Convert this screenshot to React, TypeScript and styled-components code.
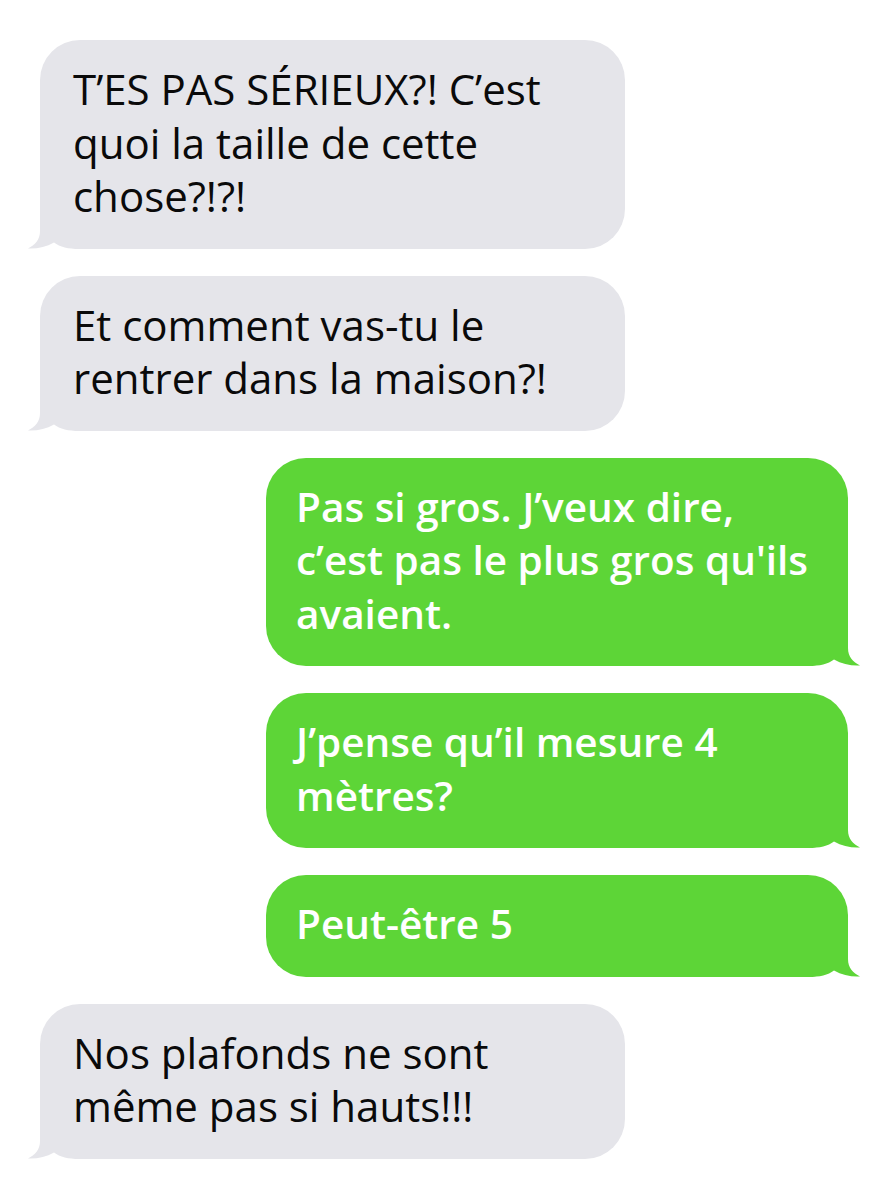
import React from 'react'
import styled, { createGlobalStyle } from 'styled-components'

const GlobalStyle = createGlobalStyle`
  html, body {
    margin: 0;
    padding: 0;
    background: #ffffff;
  }
`

type Side = 'in' | 'out'

const messages: { side: Side; lines: string[] }[] = [
  { side: 'in', lines: ['T’ES PAS SÉRIEUX?! C’est', 'quoi la taille de cette', 'chose?!?!'] },
  { side: 'in', lines: ['Et comment vas-tu le', 'rentrer dans la maison?!'] },
  { side: 'out', lines: ['Pas si gros. J’veux dire,', 'c’est pas le plus gros qu\'ils', 'avaient.'] },
  { side: 'out', lines: ['J’pense qu’il mesure 4', 'mètres?'] },
  { side: 'out', lines: ['Peut-être 5'] },
  { side: 'in', lines: ['Nos plafonds ne sont', 'même pas si hauts!!!'] },
]

const colors = {
  in: '#e5e5ea',
  out: '#5dd537',
}

const Thread = styled.div`
  display: flex;
  flex-direction: column;
  gap: 27px;
  padding: 40px 0 38px;
  width: 890px;
`

const Bubble = styled.div<{ $side: Side }>`
  position: relative;
  box-sizing: border-box;
  width: ${(p) => (p.$side === 'in' ? '585px' : '582px')};
  margin-left: ${(p) => (p.$side === 'in' ? '40px' : '266px')};
  padding: 22px ${(p) => (p.$side === 'in' ? '33px' : '30px')} 26px;
  border-radius: 40px;
  background: ${(p) => colors[p.$side]};
  color: ${(p) => (p.$side === 'in' ? '#0a0a0a' : '#ffffff')};
  font-family: 'Open Sans', 'Noto Sans', sans-serif;
  font-weight: ${(p) => (p.$side === 'in' ? 400 : 600)};
  font-size: ${(p) => (p.$side === 'in' ? '42px' : '40.5px')};
  line-height: 53.5px;
`

const Text = styled.p`
  position: relative;
  z-index: 1;
  margin: 0;
  white-space: nowrap;
`

const Tail = styled.svg<{ $side: Side }>`
  position: absolute;
  bottom: 0;
  width: 52px;
  height: 48px;
  ${(p) => (p.$side === 'in' ? 'left: -12px;' : 'right: -12px; transform: scaleX(-1);')}
`

const BubbleTail = ({ side }: { side: Side }) => (
  <Tail $side={side} viewBox="0 0 52 48">
    <path
      d="M12 0 L12 30 C12 39 7 44 0 47.5 C9 48 18 46 26 41.5 C32 46 40 48 52 48 L52 0 Z"
      fill={colors[side]}
    />
  </Tail>
)

export default function App() {
  return (
    <>
      <GlobalStyle />
      <Thread>
        {messages.map((m, i) => (
          <Bubble key={i} $side={m.side}>
            <BubbleTail side={m.side} />
            <Text>
              {m.lines.map((line, j) => (
                <React.Fragment key={j}>
                  {j > 0 && <br />}
                  {line}
                </React.Fragment>
              ))}
            </Text>
          </Bubble>
        ))}
      </Thread>
    </>
  )
}
